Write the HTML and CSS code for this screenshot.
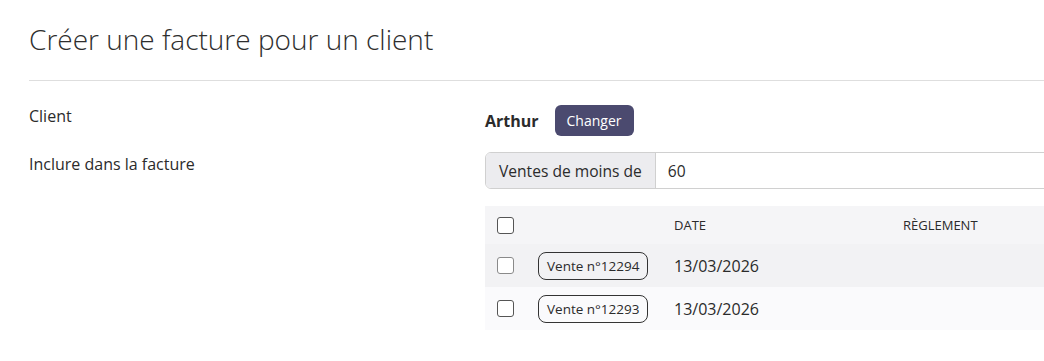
FILE: index.html
```html
<!DOCTYPE html>
<html lang="fr">
  <head>
    <meta charset="utf-8">
    <title>Créer une facture</title>
    <link rel="stylesheet" href="styles.css">
  </head>
  <body>
  <div class="page">
    <h1 class="page-title">Créer une facture pour un client</h1>
    <hr class="sep">

    <div class="form-row">
      <div class="form-label">Client</div>
      <div class="form-value client-line">
        <span class="client-name">Arthur</span>
        <button class="btn-change" type="button">Changer</button>
      </div>
    </div>

    <div class="form-row">
      <div class="form-label">Inclure dans la facture</div>
      <div class="form-value">
        <div class="input-group">
          <span class="addon">Ventes de moins de</span>
          <input class="field" type="text" value="60">
        </div>

        <table class="sales">
          <thead>
            <tr>
              <th class="col-check"><input type="checkbox" class="check"></th>
              <th class="col-ref"></th>
              <th class="col-date">Date</th>
              <th>Règlement</th>
            </tr>
          </thead>
          <tbody>
            <tr class="odd">
              <td class="col-check"><input type="checkbox" class="check soft"></td>
              <td class="col-ref"><span class="badge">Vente n°12294</span></td>
              <td class="col-date">13/03/2026</td>
              <td></td>
            </tr>
            <tr>
              <td class="col-check"><input type="checkbox" class="check"></td>
              <td class="col-ref"><span class="badge">Vente n°12293</span></td>
              <td class="col-date">13/03/2026</td>
              <td></td>
            </tr>
          </tbody>
        </table>
      </div>
    </div>
  </div>
  </body>
</html>
```

FILE: styles.css
```css
body {
  margin: 0;
  overflow: hidden;
  font-family: "Open Sans", "Liberation Sans", sans-serif;
  color: #2b2b2b;
  background: #fff;
}
.page {
  width: 1120px;
  padding-left: 29px;
}
.page-title {
  margin: 0;
  padding-top: 20px;
  font-size: 28px;
  font-weight: 300;
  line-height: 38px;
  color: #2e2e2e;
}
.sep {
  margin: 22px 0 0 0;
  border: none;
  border-top: 1px solid #dedede;
}

/* label / value rows */
.form-row {
  display: flex;
}
.form-label {
  width: 456px;
  flex-shrink: 0;
  font-size: 16px;
  line-height: 22px;
}
.form-value {
  flex: 1;
}
.client-line {
  display: flex;
  align-items: center;
  gap: 16px;
  height: 31px;
  margin: 24px 0 16px 0;
}
.form-row:nth-of-type(1) .form-label {
  margin-top: 24px;
}
.form-row + .form-row .form-label {
  padding-top: 1px;
}
.client-name {
  font-weight: 700;
  font-size: 16px;
}
.btn-change {
  font-family: inherit;
  font-size: 14px;
  color: #fff;
  background: #4b4a6f;
  border: none;
  border-radius: 6px;
  height: 31px;
  padding: 0 12px;
}

/* input group */
.input-group {
  display: flex;
  height: 37px;
  border: 1px solid #d0d0d0;
  border-radius: 6px;
  box-sizing: border-box;
  overflow: hidden;
}
.addon {
  display: flex;
  align-items: center;
  padding: 0 13px;
  background: #ececef;
  border-right: 1px solid #d0d0d0;
  font-size: 15.6px;
}
.field {
  flex: 1;
  border: none;
  padding: 0 12px;
  font-family: inherit;
  font-size: 15.6px;
  color: #2b2b2b;
  outline: none;
}

/* sales table */
.sales {
  width: 100%;
  margin-top: 17px;
  border-collapse: collapse;
}
.sales th {
  height: 38px;
  padding: 0 12px;
  text-align: left;
  font-size: 13px;
  font-weight: 400;
  text-transform: uppercase;
  background: #f5f5f7;
}
.sales td {
  height: 43px;
  padding: 0 12px;
  font-size: 16px;
  background: #fafafc;
}
.sales tr.odd td {
  background: #f2f2f4;
}
.col-check {
  width: 17px;
}
.col-ref {
  width: 112px;
}
.col-date {
  width: 205px;
}
.check {
  appearance: none;
  -webkit-appearance: none;
  display: block;
  margin: 0;
  width: 17px;
  height: 17px;
  border: 1px solid #555;
  border-radius: 3px;
  background: #fff;
}
.check.soft {
  border-color: #8a8a8a;
}
.badge {
  display: inline-block;
  height: 28px;
  line-height: 26px;
  box-sizing: border-box;
  padding: 0 8px;
  border: 1px solid #333;
  border-radius: 8px;
  font-size: 13.5px;
  white-space: nowrap;
}
```
